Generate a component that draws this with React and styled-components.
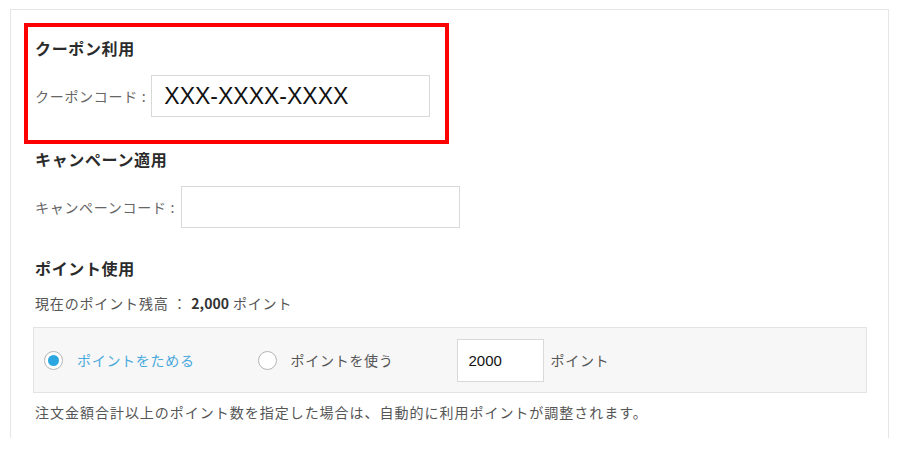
import React, { useState } from 'react';
import styled, { createGlobalStyle } from 'styled-components';

const GlobalStyle = createGlobalStyle`
    body {
        margin: 0;
        background: #fff;
        font-family: 'Noto Sans CJK JP', 'Noto Sans', sans-serif;
        color: #333;
    }
`;

const Panel = styled.div`
    box-sizing: border-box;
    margin: 9px 0 0 10px;
    width: 879px;
    height: 429px;
    padding: 13px 13px 0;
    border: 1px solid #e6e6e6;
    border-bottom: none;
`;

const Highlight = styled.div`
    box-sizing: border-box;
    width: 425px;
    height: 121px;
    padding: 9px 7px 0;
    border: 4px solid #f00;
`;

const Section = styled.div`
    padding: 0 11px;
    margin-top: ${(p) => p.$top || 0}px;
`;

const Heading = styled.h3`
    margin: 0;
    font-size: 16px;
    line-height: 24px;
    font-weight: 700;
    letter-spacing: 0.04em;
    color: #2b2b2b;
`;

const FieldRow = styled.div`
    display: flex;
    align-items: center;
    margin-top: 15px;
`;

const FieldLabel = styled.label`
    font-size: 14px;
    letter-spacing: 0.05em;
    color: #666;
    margin-right: ${(p) => p.$gap}px;
    white-space: nowrap;
`;

const TextInput = styled.input`
    box-sizing: border-box;
    width: ${(p) => p.$w}px;
    height: ${(p) => p.$h}px;
    padding: 0 ${(p) => p.$pad}px;
    border: 1px solid #d9d9d9;
    background: #fff;
    font-family: 'Liberation Sans', Arial, sans-serif;
    font-size: ${(p) => p.$fs}px;
    color: #111;
    outline: none;
`;

const Balance = styled.p`
    margin: 13px 0 0;
    font-size: 14px;
    line-height: 20px;
    letter-spacing: 0.06em;
    color: #555;

    strong {
        color: #333;
        font-weight: 700;
        letter-spacing: 0;
    }
`;

const OptionBox = styled.div`
    box-sizing: border-box;
    display: flex;
    align-items: center;
    width: 834px;
    height: 66px;
    margin: 14px 0 0 -2px;
    padding: 0 10px;
    background: #f7f7f7;
    border: 1px solid #e3e3e3;
`;

const RadioLabel = styled.label`
    display: flex;
    align-items: center;
    margin-right: 63px;
    font-size: 14px;
    letter-spacing: 0.05em;
    color: ${(p) => (p.$active ? '#49a9dd' : '#555')};
    cursor: pointer;
`;

const RadioMark = styled.span`
    box-sizing: border-box;
    display: flex;
    align-items: center;
    justify-content: center;
    width: 19px;
    height: 19px;
    margin-right: 14px;
    border-radius: 50%;
    border: 1.5px solid #b5b5b5;
    background: #fff;

    &::after {
        content: '';
        width: 11px;
        height: 11px;
        border-radius: 50%;
        background: ${(p) => (p.$checked ? '#2ba6e1' : 'transparent')};
    }
`;

const Unit = styled.span`
    margin-left: 7px;
    font-size: 14px;
    letter-spacing: 0.05em;
    color: #555;
`;

const Note = styled.p`
    margin: 9px 0 0;
    font-size: 14px;
    line-height: 20px;
    letter-spacing: 0.07em;
    color: #555;
`;

const App = () => {
    const [mode, setMode] = useState('save');

    return (
        <>
            <GlobalStyle />
            <Panel>
                <Highlight>
                    <Heading>クーポン利用</Heading>
                    <FieldRow>
                        <FieldLabel $gap={5}>クーポンコード :</FieldLabel>
                        <TextInput $w={279} $h={42} $pad={12} $fs={23} defaultValue="XXX-XXXX-XXXX" />
                    </FieldRow>
                </Highlight>

                <Section $top={3}>
                    <Heading>キャンペーン適用</Heading>
                    <FieldRow>
                        <FieldLabel $gap={6}>キャンペーンコード :</FieldLabel>
                        <TextInput $w={279} $h={42} $pad={13} $fs={16} />
                    </FieldRow>
                </Section>

                <Section $top={28}>
                    <Heading>ポイント使用</Heading>
                    <Balance>
                        現在のポイント残高 ： <strong>2,000</strong> ポイント
                    </Balance>
                    <OptionBox>
                        <RadioLabel $active={mode === 'save'} onClick={() => setMode('save')}>
                            <RadioMark $checked={mode === 'save'} />
                            ポイントをためる
                        </RadioLabel>
                        <RadioLabel $active={mode === 'use'} onClick={() => setMode('use')}>
                            <RadioMark $checked={mode === 'use'} />
                            ポイントを使う
                        </RadioLabel>
                        <TextInput $w={87} $h={43} $pad={11} $fs={15} defaultValue="2000" />
                        <Unit>ポイント</Unit>
                    </OptionBox>
                    <Note>注文金額合計以上のポイント数を指定した場合は、自動的に利用ポイントが調整されます。</Note>
                </Section>
            </Panel>
        </>
    );
};

export default App;
